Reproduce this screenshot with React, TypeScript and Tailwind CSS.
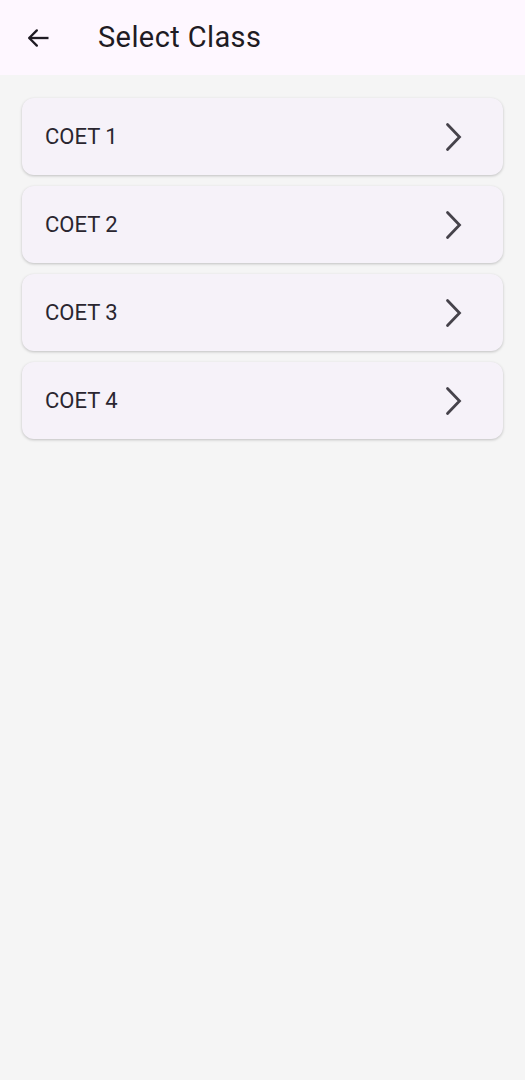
import React from 'react';

const classes = ['COET 1', 'COET 2', 'COET 3', 'COET 4'];

function ClassCard({ name }: { name: string }) {
  return (
    <div className="flex h-[77px] items-center justify-between rounded-[12px] bg-[#f6f2f9] pl-[23px] pr-[39px] shadow-[0_1px_3px_rgba(0,0,0,0.22)]">
      <span className="text-[22px] text-[#2a2630]">{name}</span>
      <svg width="20" height="32" viewBox="0 0 20 32" fill="none" stroke="#46434b" strokeWidth="2.8" strokeLinecap="round" strokeLinejoin="miter">
        <path d="M3.5 3.5 L15.5 16 L3.5 28.5" />
      </svg>
    </div>
  );
}

export default function App() {
  return (
    <div className="flex min-h-[1080px] w-full flex-col bg-[#f5f5f5]" style={{ fontFamily: 'Roboto, "Noto Sans", sans-serif' }}>
      <header className="flex h-[75px] items-center bg-[#fef7ff] pl-[24px]">
        <svg width="28" height="28" viewBox="0 0 24 24" fill="none" stroke="#1f1b23" strokeWidth="2" strokeLinecap="square">
          <path d="M20 12 H5" />
          <path d="M11 5.5 L4.5 12 L11 18.5" strokeLinecap="round" strokeLinejoin="round" />
        </svg>
        <h1 className="ml-[46px] text-[29px] tracking-[0.4px] text-[#1f1b23]">Select Class</h1>
      </header>
      <main className="flex flex-col gap-[11px] px-[22px] pt-[23px]">
        {classes.map((c) => (
          <ClassCard key={c} name={c} />
        ))}
      </main>
    </div>
  );
}
